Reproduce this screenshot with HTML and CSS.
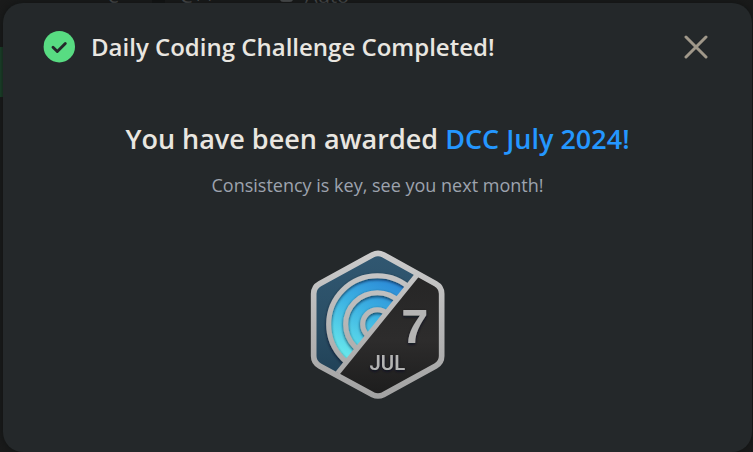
FILE: index.html
```html
<!DOCTYPE html>
<html lang="en">
<head>
<meta charset="utf-8">
<meta name="viewport" content="width=device-width, initial-scale=1">
<title>Daily Coding Challenge</title>
<link rel="stylesheet" href="styles.css">
</head>
<body>
<div class="backdrop">
  <span class="editor-sync">e-</span>
  <span class="editor-divider"></span>
  <span class="editor-language">C++</span>
  <span class="editor-lock"></span>
  <span class="editor-mode">Auto</span>
  <span class="editor-gutter"></span>
</div>
<main class="dialog" role="dialog" aria-labelledby="dialog-title">
  <header class="dialog-header">
    <svg class="status-icon" viewBox="0 0 32 32" aria-hidden="true">
      <circle cx="16.3" cy="15.7" r="15.7" fill="#58dc82"/>
      <path d="M10 16.2l4.3 4.3 8-8" fill="none" stroke="#24282a" stroke-width="2.9" stroke-linecap="round" stroke-linejoin="round"/>
    </svg>
    <h1 class="dialog-title" id="dialog-title">Daily Coding Challenge Completed!</h1>
    <button class="close-button" type="button" aria-label="Close">
      <svg class="close-icon" viewBox="0 0 24 24" aria-hidden="true">
        <path d="M2 2l20 20M22 2L2 22" fill="none" stroke="#a0988a" stroke-width="3" stroke-linecap="round"/>
      </svg>
    </button>
  </header>
  <section class="award">
    <h2 class="award-title">You have been awarded <a class="award-link" href="#badge">DCC July 2024!</a></h2>
    <p class="award-note">Consistency is key, see you next month!</p>
    <svg class="badge" id="badge" viewBox="30 26 408 456" role="img" aria-label="July badge">
      <defs>
        <linearGradient id="metal" gradientUnits="userSpaceOnUse" x1="0" y1="30" x2="0" y2="476">
          <stop offset="0" stop-color="#cccccc"/>
          <stop offset=".5" stop-color="#b6b6b6"/>
          <stop offset="1" stop-color="#a2a2a2"/>
        </linearGradient>
        <linearGradient id="sky" x1="0" y1="0" x2="0" y2="1">
          <stop offset="0" stop-color="#315872"/>
          <stop offset=".5" stop-color="#2a4e65"/>
          <stop offset="1" stop-color="#1c3b50"/>
        </linearGradient>
        <linearGradient id="wave" gradientUnits="userSpaceOnUse" x1="280" y1="110" x2="150" y2="350">
          <stop offset="0" stop-color="#2a86d6"/>
          <stop offset=".45" stop-color="#3bb0e2"/>
          <stop offset="1" stop-color="#66e6ec"/>
        </linearGradient>
        <linearGradient id="coal" x1="0" y1="0" x2="0" y2="1">
          <stop offset="0" stop-color="#232323"/>
          <stop offset=".6" stop-color="#2d2c2c"/>
          <stop offset="1" stop-color="#1b1b1b"/>
        </linearGradient>
        <filter id="relief" x="-10%" y="-10%" width="120%" height="120%">
          <feDropShadow dx="0" dy="4" stdDeviation="4" flood-color="#061522" flood-opacity=".75"/>
        </filter>
        <clipPath id="shell">
          <path d="M218 43Q234 35 250 43L407 130Q425 140 425 160V347Q425 367 407 377L250 463Q234 471 218 463L59 377Q41 367 41 347V160Q41 140 59 130Z"/>
        </clipPath>
        <clipPath id="upper"><path d="M0 0H435L350 105L113 398L31 500H0Z"/></clipPath>
      </defs>
      <g clip-path="url(#shell)">
        <path fill="url(#coal)" d="M30 26H438V482H30Z"/>
        <g clip-path="url(#upper)">
          <path fill="url(#sky)" d="M30 26H438V482H30Z"/>
          <circle cx="232" cy="252" r="146" fill="url(#wave)"/>
          <g fill="none" stroke="url(#metal)" stroke-width="15" filter="url(#relief)">
            <circle cx="232" cy="252" r="146"/>
            <circle cx="232" cy="252" r="95"/>
            <circle cx="232" cy="252" r="44"/>
          </g>
        </g>
      </g>
      <g fill="none" stroke="url(#metal)">
        <path stroke-width="15" d="M350 105L113 398"/>
        <path stroke-width="17" d="M218 43Q234 35 250 43L407 130Q425 140 425 160V347Q425 367 407 377L250 463Q234 471 218 463L59 377Q41 367 41 347V160Q41 140 59 130Z"/>
      </g>
      <g class="badge-text" filter="url(#relief)">
        <text class="badge-number" x="344" y="308">7</text>
        <text class="badge-month" x="262" y="388">JUL</text>
      </g>
    </svg>
  </section>
</main>
</body>
</html>
```
FILE: styles.css
```css
* {
  box-sizing: border-box;
}

body {
  margin: 0;
  min-height: 100vh;
  display: flex;
  padding: 3px 1px 0 3px;
  background: #1a1b1b;
  color: #e9e6e0;
  font-family: "Segoe UI", "Open Sans", sans-serif;
  overflow: hidden;
}

.backdrop {
  position: absolute;
  inset: 0;
  overflow: hidden;
  color: #55585a;
  font-size: 20px;
  line-height: 28px;
}

.editor-sync,
.editor-language,
.editor-mode {
  position: absolute;
  top: -18px;
  left: 180px;
}

.editor-sync {
  left: 108px;
}

.editor-mode {
  left: 305px;
}

.editor-divider {
  position: absolute;
  top: 0;
  left: 152px;
  width: 13px;
  height: 3px;
  background: #121313;
}

.editor-lock {
  position: absolute;
  top: -8px;
  left: 280px;
  width: 13px;
  height: 10px;
  border-radius: 3px;
  background: #55585a;
}

.editor-gutter {
  position: absolute;
  top: 47px;
  left: 0;
  width: 4px;
  height: 50px;
  background: #1c4a2d;
}

.dialog {
  position: relative;
  flex: 1;
  padding: 24px 40px;
  border-radius: 20px;
  background: #24282a;
  box-shadow: 0 0 8px #111313;
}

.dialog-header {
  display: flex;
  align-items: center;
  gap: 16px;
}

.status-icon {
  flex: none;
  width: 32px;
  height: 32px;
}

.dialog-title {
  flex: 1;
  margin: 0;
  font-size: 24px;
  font-weight: 600;
  line-height: 40px;
}

.close-button {
  display: flex;
  padding: 4px;
  border: 0;
  background: none;
  cursor: pointer;
}

.close-icon {
  width: 24px;
  height: 24px;
}

.award {
  display: flex;
  flex-direction: column;
  align-items: center;
  padding-top: 52px;
  text-align: center;
}

.award-title {
  margin: 0;
  font-size: 27px;
  font-weight: 600;
  line-height: 40px;
}

.award-link {
  color: #2497ff;
  text-decoration: none;
}

.award-note {
  margin: 14px 0 52px;
  color: #9da3ae;
  font-size: 18px;
  line-height: 24px;
}

.badge {
  width: 136px;
  height: 152px;
}

.badge-text {
  fill: #b4b4b4;
  font-family: Roboto, sans-serif;
  font-weight: 500;
  text-anchor: middle;
}

.badge-number {
  font-family: "Liberation Sans", sans-serif;
  font-size: 146px;
  font-weight: 700;
}

.badge-month {
  font-size: 61px;
}
```
